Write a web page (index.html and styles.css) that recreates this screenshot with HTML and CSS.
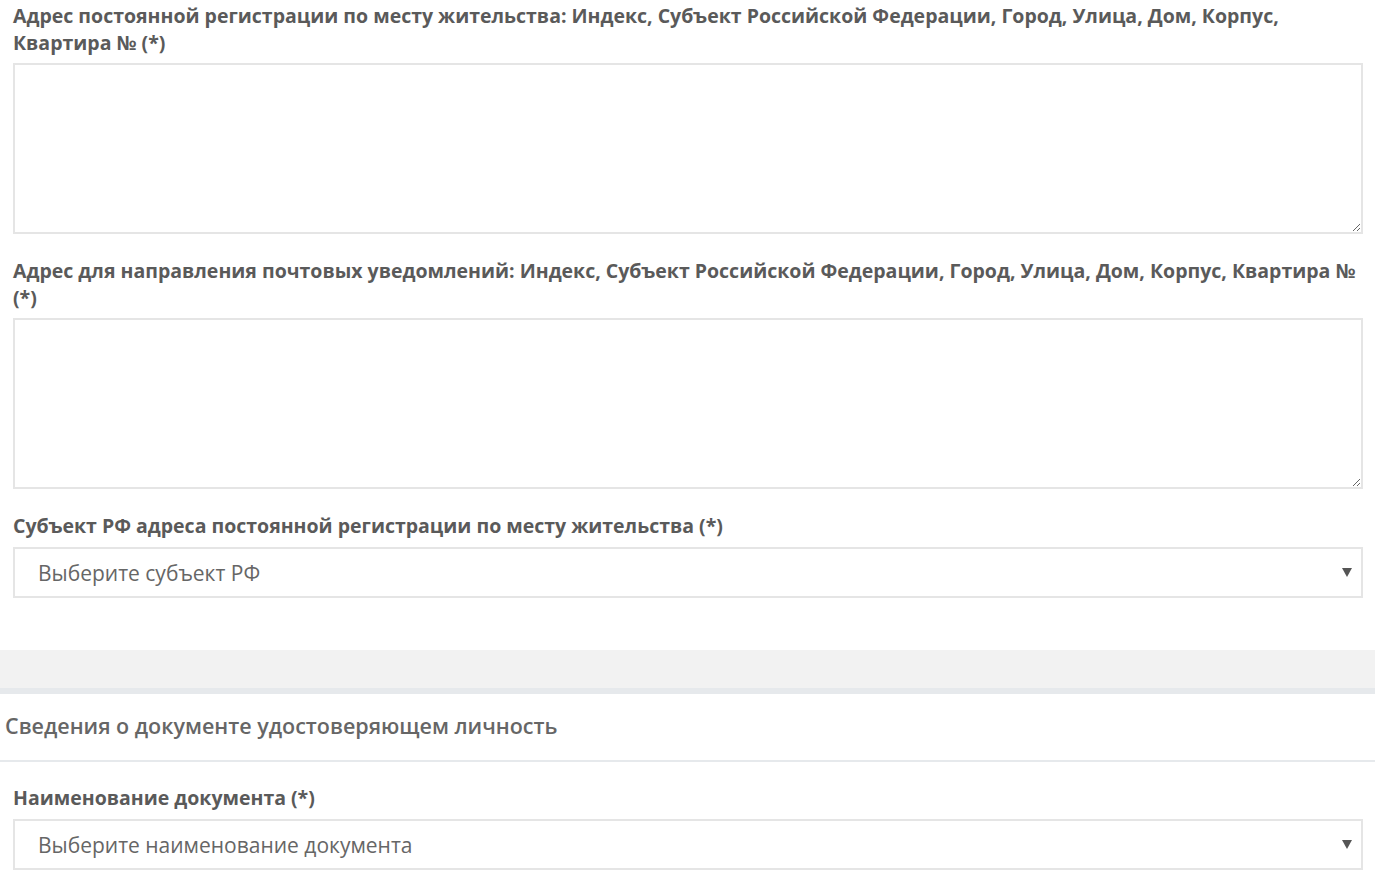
FILE: index.html
```html
<!DOCTYPE html>
<html lang="ru">
<head>
<meta charset="utf-8">
<title>Форма</title>
<link rel="stylesheet" href="styles.css">
</head>
<body>
<div class="form-body">
  <div class="field">
    <label class="label">Адрес постоянной регистрации по месту жительства: Индекс, Субъект Российской Федерации, Город, Улица, Дом, Корпус, Квартира № (*)</label>
    <textarea class="textarea"></textarea>
  </div>
  <div class="field">
    <label class="label">Адрес для направления почтовых уведомлений: Индекс, Субъект Российской Федерации, Город, Улица, Дом, Корпус, Квартира № (*)</label>
    <textarea class="textarea"></textarea>
  </div>
  <div class="field">
    <label class="label">Субъект РФ адреса постоянной регистрации по месту жительства (*)</label>
    <div class="select"><span class="select-text">Выберите субъект РФ</span><span class="arrow"></span></div>
  </div>
</div>
<div class="separator"></div>
<div class="panel">
  <div class="panel-heading">Сведения о документе удостоверяющем личность</div>
  <div class="panel-body">
    <div class="field">
      <label class="label">Наименование документа (*)</label>
      <div class="select"><span class="select-text">Выберите наименование документа</span><span class="arrow"></span></div>
    </div>
  </div>
</div>
</body>
</html>
```

FILE: styles.css
```css
html, body {
  margin: 0;
  padding: 0;
  background: #fff;
}
body {
  font-family: "Open Sans", "Liberation Sans", sans-serif;
  color: #5a5a5a;
}
.form-body {
  padding: 2px 12px 52px 13px;
}
.field {
  display: flex;
  flex-direction: column;
  margin-bottom: 23px;
}
.form-body .field:last-child,
.panel-body .field:last-child {
  margin-bottom: 0;
}
.label {
  font-size: 19.5px;
  font-weight: 700;
  line-height: 27px;
  color: #5a5a5a;
  margin-bottom: 7px;
}
.textarea {
  display: block;
  box-sizing: border-box;
  width: 100%;
  height: 171px;
  margin: 0;
  border: 2px solid #e5e5e5;
  border-radius: 0;
  background: #fff;
  resize: vertical;
  font-family: inherit;
  outline: none;
}
.select {
  box-sizing: border-box;
  height: 51px;
  margin-top: 1px;
  border: 2px solid #e5e5e5;
  background: #fff;
  display: flex;
  align-items: center;
  justify-content: space-between;
  padding: 0 9px 0 23px;
}
.select-text {
  font-size: 21px;
  color: #666;
  line-height: 28px;
}
.arrow {
  width: 0;
  height: 0;
  border-left: 5px solid transparent;
  border-right: 5px solid transparent;
  border-top: 9px solid #555;
}
.separator {
  height: 38px;
  background: #f2f2f2;
  border-bottom: 6px solid #e6e9ec;
}
.panel-heading {
  font-size: 21.5px;
  font-weight: 600;
  color: #666;
  line-height: 30px;
  padding: 17px 5px 19px;
  border-bottom: 2px solid #e6e9ec;
}
.panel-body {
  padding: 22px 12px 10px 13px;
}
```
